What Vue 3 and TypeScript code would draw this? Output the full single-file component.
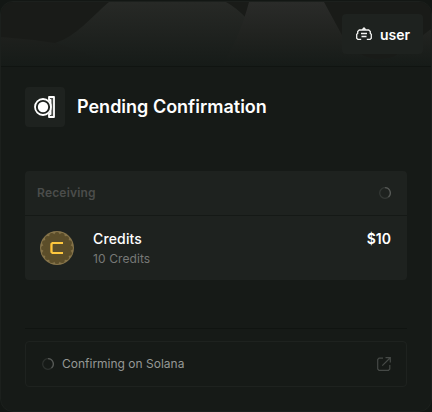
<script setup lang="ts">
import { computed } from 'vue'

interface Asset {
  name: string
  amount: number
  value: number
}

const username = 'user'
const asset: Asset = { name: 'Credits', amount: 10, value: 10 }
const quantity = computed(() => `${asset.amount} ${asset.name}`)

const scallops = Array.from({ length: 16 }, (_, i) => {
  const angle = (i * Math.PI) / 8
  return { x: 17 + Math.cos(angle) * 13.4, y: 17 + Math.sin(angle) * 13.4 }
})
</script>

<template>
  <main class="card">
    <header class="banner">
      <svg class="hills" width="430" height="64" viewBox="0 0 430 64" aria-hidden="true">
        <defs>
          <linearGradient id="back" x1="0" y1="0" x2="0" y2="64" gradientUnits="userSpaceOnUse">
            <stop offset="0" stop-color="#272926" />
            <stop offset="0.5" stop-color="#1f221f" />
            <stop offset="1" stop-color="#161b18" />
          </linearGradient>
          <linearGradient id="front" x1="0" y1="0" x2="0" y2="64" gradientUnits="userSpaceOnUse">
            <stop offset="0" stop-color="#2a2b29" />
            <stop offset="0.5" stop-color="#212320" />
            <stop offset="1" stop-color="#161b18" />
          </linearGradient>
          <linearGradient id="low" x1="0" y1="35" x2="0" y2="64" gradientUnits="userSpaceOnUse">
            <stop offset="0" stop-color="#1e201d" />
            <stop offset="1" stop-color="#161b18" />
          </linearGradient>
        </defs>
        <path fill="url(#low)" d="M0 35Q28 37 54 41L110 53V64H0Z" />
        <path fill="url(#back)" d="M54 41C76 34 89 16 108 0H225Q236 6 246 17L280 64H110Q82 49 54 41Z" />
        <path fill="url(#front)" d="M248 0H323L342 35Q352 50 366 55Q380 60 394 54Q408 44 430 27V64H220Q238 38 248 0Z" />
      </svg>
      <div class="user-chip">
        <svg width="16" height="14" viewBox="0 0 16 14" fill="none" stroke="#f4f4f2" stroke-width="1.3" aria-hidden="true">
          <path d="M5 3H3.300L1.700 4.500V6.500L.7 7.300v4l1.200 1.100h3.300M11 3h1.700l1.600 1.500V6.500l1 .8v4l-1.200 1.100h-3.300M4.500 3h7M6.500 2.500L8 1l1.500 1.500" />
          <path d="M5 6.500h6M5.500 9.500h5" />
        </svg>
        <span>{{ username }}</span>
      </div>
    </header>

    <section class="content">
      <div class="heading">
        <div class="heading-icon">
          <svg width="24" height="24" viewBox="0 0 24 24" fill="none" aria-hidden="true">
            <path d="M16 2h5v20h-5v-3h1.500V5H16Z" fill="#4b4e4b" stroke="#fff" stroke-width="1.800" stroke-linejoin="round" />
            <circle cx="10" cy="12" r="8" fill="#1e221f" stroke="#fff" stroke-width="1.800" />
            <circle cx="10" cy="12" r="5.200" fill="#fff" />
          </svg>
        </div>
        <h1>Pending Confirmation</h1>
      </div>

      <div class="receiving">
        <div class="receiving-head">
          <span>Receiving</span>
          <svg width="12" height="12" viewBox="0 0 12 12" fill="none" stroke-width="1.300" aria-hidden="true">
            <circle cx="6" cy="6" r="5.300" stroke="#343835" />
            <path d="M6 .7A5.3 5.3 0 0 1 9.500 10" stroke="#555855" />
          </svg>
        </div>
        <div class="asset">
          <svg class="coin" width="34" height="34" viewBox="0 0 34 34" fill="none" aria-hidden="true">
            <circle cx="17" cy="17" r="17" fill="#857349" />
            <circle cx="17" cy="17" r="14" fill="#5c4e2a" />
            <circle v-for="(s, i) in scallops" :key="i" :cx="s.x" :cy="s.y" r="2.500" fill="#5c4e2a" />
            <path d="M23 12H12.500L11.500 13v8l1 1H23" stroke="#ffc83e" stroke-width="2.200" />
            <path d="M10.500 13.500v7" stroke="#d99c27" stroke-width="1" />
          </svg>
          <div class="asset-info">
            <span class="asset-name">{{ asset.name }}</span>
            <span class="asset-quantity">{{ quantity }}</span>
          </div>
          <span class="asset-value">${{ asset.value }}</span>
        </div>
      </div>

      <div class="status-area">
        <div class="status">
          <svg width="12" height="12" viewBox="0 0 12 12" fill="none" stroke-width="1.300" aria-hidden="true">
            <circle cx="6" cy="6" r="5.300" stroke="#2d312e" />
            <path d="M6 .7A5.3 5.3 0 0 1 9.500 10" stroke="#555855" />
          </svg>
          <span class="status-text">Confirming on Solana</span>
          <svg class="external" width="14" height="14" viewBox="0 0 14 14" fill="none" stroke="#454946" stroke-width="1.200" aria-hidden="true">
            <path d="M6 1.200H2L.7 2.500V12L2 13.300h9.500l1.300-1.300V8M8.500.7h4.800v4.800M13 1L5.300 8.700" />
          </svg>
        </div>
      </div>
    </section>
  </main>
</template>

<style>
body {
  background: #131714;
}
</style>

<style scoped>
.card {
  box-sizing: border-box;
  width: 432px;
  height: 411px;
  border: 1px solid #1c201d;
  border-radius: 13px;
  margin-top: 1px;
  overflow: hidden;
  background: #161a17;
  color: #fff;
  font-family: Inter, "Liberation Sans", sans-serif;
}
.banner {
  box-sizing: border-box;
  position: relative;
  display: flex;
  justify-content: flex-end;
  align-items: flex-start;
  height: 65px;
  padding: 12px 8px 0 0;
  background: #191b18;
  border-bottom: 1px solid #101411;
}
.hills {
  position: absolute;
  inset: 0;
}
.user-chip {
  position: relative;
  box-sizing: border-box;
  display: flex;
  align-items: center;
  gap: 8px;
  width: 81px;
  height: 40px;
  padding: 0 12px 0 14px;
  border-radius: 4px;
  background: #1e221f;
  font-size: 14px;
  font-weight: 600;
}
.content {
  padding: 20px 24px 0;
}
.heading {
  display: flex;
  align-items: center;
  gap: 12px;
}
.heading-icon {
  display: grid;
  place-items: center;
  width: 40px;
  height: 40px;
  border-radius: 4px;
  background: #1e221f;
}
h1 {
  margin: 0;
  font-size: 18px;
  line-height: 24px;
  font-weight: 600;
}
.receiving {
  margin-top: 44px;
  border-radius: 4px;
  background: #1e221f;
}
.receiving-head {
  box-sizing: border-box;
  display: flex;
  align-items: center;
  justify-content: space-between;
  height: 45px;
  padding: 0 16px 1px 12px;
  border-bottom: 1px solid #151916;
  color: #4b4d4b;
  font-size: 12px;
  font-weight: 600;
  letter-spacing: 0.2px;
}
.asset {
  box-sizing: border-box;
  display: flex;
  height: 64px;
  padding: 13px 16px 0 15px;
}
.coin {
  margin-top: 2px;
}
.asset-info {
  display: flex;
  flex: 1;
  flex-direction: column;
  margin-left: 19px;
}
.asset-name,
.asset-value {
  font-size: 14px;
  line-height: 20px;
  font-weight: 600;
}
.asset-name {
  font-weight: 500;
  letter-spacing: 0.15px;
}
.asset-quantity {
  color: #777977;
  font-size: 12px;
  line-height: 20px;
  letter-spacing: 0.1px;
}
.status-area {
  margin-top: 48px;
  padding-top: 12px;
  border-top: 1px solid #101411;
}
.status {
  box-sizing: border-box;
  display: flex;
  align-items: center;
  gap: 8px;
  height: 46px;
  padding: 0 15px 0 16px;
  border: 1px solid #1e221f;
  border-radius: 4px;
  color: #959895;
  font-size: 12px;
}
.status-text {
  padding-bottom: 2px;
}
.external {
  margin-left: auto;
}
</style>
